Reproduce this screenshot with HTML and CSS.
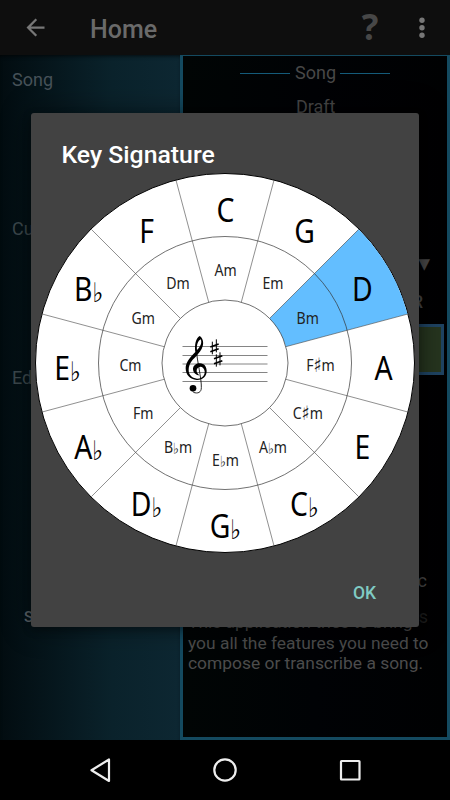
FILE: index.html
```html
<!DOCTYPE html>
<html lang="en">
<head>
<meta charset="utf-8">
<title>Key Signature</title>
<link rel="stylesheet" href="styles.css">
</head>
<body>
<div class="screen">
  <header class="bar">
    <svg class="back" viewBox="0 0 24 24"><path d="M20 11H7.83l5.59-5.59L12 4l-8 8 8 8 1.41-1.41L7.83 13H20z"/></svg>
    <h1>Home</h1>
    <span class="help">?</span>
    <svg class="more" viewBox="0 0 6 22"><circle cx="3" cy="3.2" r="2.7"/><circle cx="3" cy="10.7" r="2.7"/><circle cx="3" cy="18.2" r="2.7"/></svg>
  </header>
  <main class="content">
    <nav class="side">
      <div class="item item-song">Song</div>
      <div class="item item-cut">Cu</div>
      <div class="item item-edit">Ed</div>
      <div class="item item-s">S</div>
    </nav>
    <section class="panel">
      <div class="heading"><i></i><span>Song</span><i></i></div>
      <div class="draft">Draft</div>
      <div class="arrow">▼</div>
      <div class="letter">R</div>
      <div class="swatch"></div>
      <div class="music">c</div>
      <div class="faint">s</div>
      <p>This application tries to bring<br>you all the features you need to<br>compose or transcribe a song.</p>
    </section>
  </main>
  <footer class="nav">
    <svg viewBox="0 0 26 26"><path d="M22 2.500V24L4.500 13.200z"/></svg>
    <svg viewBox="0 0 26 26"><circle cx="13" cy="13" r="10.700"/></svg>
    <svg viewBox="0 0 26 26"><rect x="4" y="4" width="18.500" height="18.500" rx=".5"/></svg>
  </footer>
  <div class="dialog">
    <h2>Key Signature</h2>
    <svg class="wheel" id="wheel" viewBox="-190 -190 380 380"></svg>
    <button class="ok">OK</button>
  </div>
</div>
<script src="wheel.js"></script>
</body>
</html>
```
FILE: styles.css
```css
* { box-sizing: border-box; }
body { margin: 0; background: #000; font-family: Roboto, sans-serif; }
.screen { position: relative; width: 450px; height: 800px; overflow: hidden; display: flex; flex-direction: column; }
.bar { height: 55px; background: #0e0e0e; display: flex; align-items: center; padding: 0 25px 0 22px; flex: none; }
.back { width: 27px; height: 27px; fill: #777; }
h1 { margin: 4px 0 0 41px; font-size: 25px; line-height: 30px; font-weight: 500; color: #6a6a6a; }
.help { margin: -2px 0 0 auto; font: 700 35px/40px "Open Sans", sans-serif; color: #474747; width: 20px; text-align: center; }
.more { width: 6px; height: 22px; fill: #777; margin-left: 39px; }
.content { height: 685px; display: flex; }
.side { width: 180px; background: linear-gradient(90deg, #020c10, #0a222b 62%, #0d2732); box-shadow: inset 0 3px 5px -3px #000; color: #465158; font-size: 18px; line-height: 22px; padding: 14px 0 0 12px; }
.item-song { margin-bottom: 127px; }
.item-cut, .item-edit { color: #3c484d; }
.item-cut { margin-bottom: 127px; }
.item-edit { margin-bottom: 217px; }
.item-s { padding-left: 12px; font-size: 15px; font-weight: 500; color: #5c6468; }
.panel { flex: 1; position: relative; border: solid #144a60; border-width: 1px 3px 3px 3px; background: linear-gradient(90deg, #010505, #000205 50%, #000102); color: #484848; font-size: 18px; }
.heading { display: flex; align-items: center; gap: 5px; margin: 6px 0 0 57px; line-height: 22px; }
.heading i { width: 50px; height: 1px; background: #145b7a; }
.heading span { width: 40px; }
.draft { margin: 12px 0 0 113px; line-height: 22px; }
.arrow, .letter, .swatch, .music, .faint { position: absolute; }
.arrow { right: 17px; top: 196px; font: 15px/24px "DejaVu Sans", sans-serif; }
.letter { right: 24px; top: 235px; font-weight: 500; line-height: 22px; }
.swatch { right: 3px; top: 268px; width: 50px; height: 51px; border: 3px solid #1f4463; background: #26351f; }
.music { right: 20px; top: 514px; line-height: 22px; }
.faint { right: 19px; top: 550px; line-height: 22px; color: #1c1c1c; }
.panel p { position: absolute; left: 5px; top: 556px; margin: 0; line-height: 20.500px; white-space: nowrap; font-size: 17.400px; color: #4c4c4c; }
.nav { flex: 1; display: flex; justify-content: center; align-items: center; gap: 99px; background: #000; }
.nav svg { width: 26px; height: 26px; fill: none; stroke: #eee; stroke-width: 2.200; stroke-linejoin: round; }
.dialog { position: absolute; left: 31px; top: 113px; width: 388px; height: 514px; background: #424242; border-radius: 3px; box-shadow: 0 3px 8px rgba(0,0,0,.3), 0 0 30px rgba(0,0,0,.45); display: flex; flex-direction: column; }
h2 { margin: 26px 0 0 30.500px; color: #fff; font-size: 24.800px; line-height: 32px; font-weight: 500; }
.wheel { width: 380px; height: 380px; margin: 2px 0 0 4px; flex: none; }
.ok { align-self: flex-end; margin: 27px 43px 0 0; padding: 0; border: 0; background: none; color: #80cbc4; font: 500 17.500px/26px Roboto, sans-serif; }
.disc { fill: #fff; stroke: #000; stroke-width: 1; }
.ring { fill: none; stroke: #333; stroke-width: .7; }
.hub { fill: #fff; stroke: #333; stroke-width: .7; }
.selected { fill: #63beff; }
.spoke { stroke: #444; stroke-width: .6; }
.wheel text { font-family: "Noto Sans", sans-serif; text-anchor: middle; fill: #000; }
.major { font-size: 33px; }
.wheel .minor { font-size: 17px; fill: #222; }
.wheel .sign { font-family: "DejaVu Sans", sans-serif; }
.staff { stroke: #777; stroke-width: .9; }
.clef { fill: #000; }
.sharp { fill: none; stroke: #000; }
```
FILE: wheel.js
```js
const majors = ["C", "G", "D", "A", "E", "C♭", "G♭", "D♭", "A♭", "E♭", "B♭", "F"];
const minors = ["Am", "Em", "Bm", "F♯m", "C♯m", "A♭m", "E♭m", "B♭m", "Fm", "Cm", "Gm", "Dm"];
const at = (r, deg) => {
  const a = deg * Math.PI / 180;
  return [(r * Math.sin(a)).toFixed(2), (-r * Math.cos(a)).toFixed(2)];
};
const mark = (s, flat, sharp) => s.replace(/([♭♯])(m?)/, (_, c, m) =>
  `<tspan class="sign" font-size="${c === "♭" ? flat : sharp}" dy="1">${c}</tspan>` + (m ? `<tspan dy="-1">${m}</tspan>` : ""));
let out = `<circle class="disc" r="189.500"/>`;
out += `<path class="selected" d="M0 0L${at(189, 45)}A189 189 0 0 1 ${at(189, 75)}z"/>`;
out += `<circle class="ring" r="126.500"/>`;
for (let i = 0; i < 12; i++) {
  const [x1, y1] = at(63, i * 30 + 15);
  const [x2, y2] = at(189, i * 30 + 15);
  out += `<line class="spoke" x1="${x1}" y1="${y1}" x2="${x2}" y2="${y2}"/>`;
}
out += `<circle class="hub" r="63"/>`;
for (let i = 0; i < 12; i++) {
  const [x, y] = at(158, i * 30);
  const [u, v] = at(95, i * 30);
  out += `<text class="major" transform="translate(${+x + .5} ${+y + 16.500}) scale(.86 1)">${mark(majors[i], 27, 27)}</text>`;
  out += `<text class="minor" transform="translate(${+u + .5} ${+v + 8}) scale(.83 1)">${mark(minors[i], 15, 20)}</text>`;
}
for (const y of [-16.500, -7.500, 1, 9.500, 18.500]) out += `<line class="staff" x1="-42.500" y1="${y}" x2="42.500" y2="${y}"/>`;
out += `<g transform="translate(-55 -38) scale(.3333)">
<path class="clef" fill-rule="evenodd" d="M89 33C98 38 102 52 98 64C95 75 87 84 77 95C65 106 57 117 56 133C55 149 66 160 81 161C97 162 105 151 104 139C103 130 97 125 91 125C84 126 79 132 80 139C81 144 84 148 89 151C76 150 69 141 69 131C70 121 79 115 90 115C103 115 110 126 110 138C110 155 97 166 80 165C60 164 47 149 47 130C47 112 60 97 76 81C73 61 77 40 89 33ZM92 43C84 47 79 60 81 75C91 66 97 53 92 43Z"/>
<path d="M79 76C81 105 95 162 94 188C94 202 84 207 70 202" fill="none" stroke="#000" stroke-width="2.500"/>
<circle class="clef" cx="69" cy="190" r="10"/>
<path class="sharp" stroke-width="3" d="M127 50V88M139 43V82M139 88V125M150 82V121"/>
<path class="sharp" stroke-width="5" d="M121 66L146 57M121 80L146 71M132 101L157 92M132 116L157 107"/>
</g>`;
document.getElementById("wheel").innerHTML = out;
```
